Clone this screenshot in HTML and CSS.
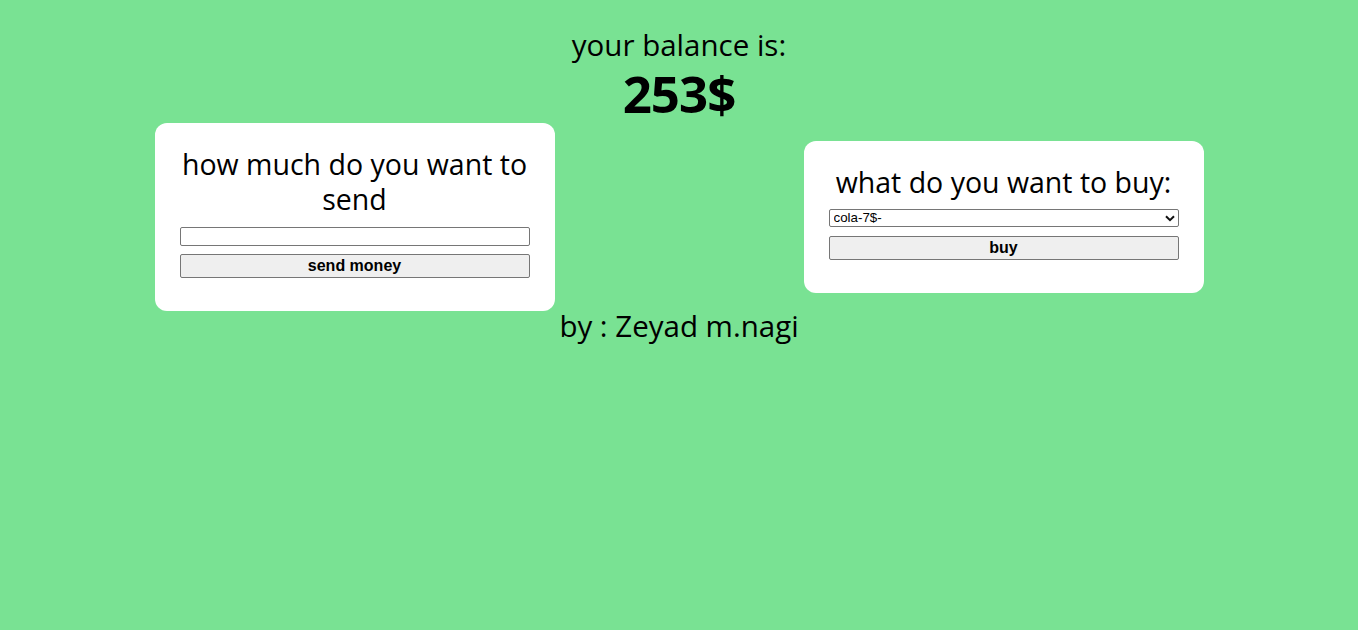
FILE: index.html
```html
<!DOCTYPE html>
<html lang="en">
<head>
<meta charset="utf-8">
<title>bank</title>
<link rel="stylesheet" href="styles.css">
</head>
<body>
  <main class="page">
    <p class="balance-label">your balance is:</p>
    <p class="balance-amount">253$</p>
    <section class="cards">
      <div class="card">
        <h2 class="card-title">how much do you want to send</h2>
        <input class="field" type="text">
        <button class="btn" type="button">send money</button>
      </div>
      <div class="card">
        <h2 class="card-title">what do you want to buy:</h2>
        <div class="select-wrap">
          <select class="select">
            <option>cola-7$-</option>
            <option>chips-5$-</option>
          </select>
          <svg class="chevron" width="10" height="7" viewBox="0 0 10 7"><path d="M1 1.2 L5 5.2 L9 1.2" fill="none" stroke="#111" stroke-width="2"/></svg>
        </div>
        <button class="btn btn-buy" type="button">buy</button>
      </div>
    </section>
    <p class="credit">by : Zeyad m.nagi</p>
  </main>
</body>
</html>
```
FILE: styles.css
```css
html, body {
  margin: 0;
  padding: 0;
  background: #79e293;
}
body {
  font-family: "Open Sans", "Noto Sans", sans-serif;
  color: #000;
}
.page {
  box-sizing: border-box;
  min-height: 100vh;
  padding: 27px 0 40px;
  display: flex;
  flex-direction: column;
  align-items: center;
}
.balance-label {
  margin: 0;
  font-size: 29.5px;
  line-height: 36px;
}
.balance-amount {
  margin: 0;
  font-size: 51px;
  line-height: 60px;
  font-weight: 700;
  letter-spacing: -1px;
}
.cards {
  display: flex;
  justify-content: center;
  align-items: center;
  gap: 249px;
  width: 100%;
}
.card {
  width: 350px;
  background: #fff;
  border-radius: 12px;
  padding: 24px 25px 33px;
  display: flex;
  flex-direction: column;
}
.card-title {
  margin: 0 0 9.5px;
  font-size: 28.5px;
  line-height: 35px;
  font-weight: 400;
  text-align: center;
}
.field {
  display: block;
  box-sizing: border-box;
  width: 100%;
  height: 19px;
  margin: 0;
  padding: 1px 2px;
  border: 1px solid #767676;
  border-radius: 2px;
  background: #fff;
  font-family: "Liberation Sans", Arial, sans-serif;
  font-size: 13.33px;
}
.btn {
  display: block;
  box-sizing: border-box;
  width: 100%;
  height: 24px;
  margin: 8px 0 0;
  padding: 0;
  border: 1px solid #767676;
  border-radius: 2px;
  background: #efefef;
  font-family: "Liberation Sans", Arial, sans-serif;
  font-size: 16px;
  font-weight: 700;
  color: #000;
}
.btn-buy {
  margin-top: 9px;
}
.select-wrap {
  position: relative;
  width: 100%;
  height: 18px;
}
.select {
  display: block;
  box-sizing: border-box;
  width: 100%;
  height: 18px;
  margin: 0;
  padding: 0 0 0 4px;
  border: 1px solid #767676;
  border-radius: 2px;
  background: #fff;
  -webkit-appearance: none;
  appearance: none;
  font-family: "Liberation Sans", Arial, sans-serif;
  font-size: 13.33px;
  line-height: 16px;
  color: #000;
}
.chevron {
  position: absolute;
  right: 4px;
  top: 6px;
  pointer-events: none;
}
.credit {
  margin: 0;
  font-size: 29.5px;
  line-height: 30px;
}
```
